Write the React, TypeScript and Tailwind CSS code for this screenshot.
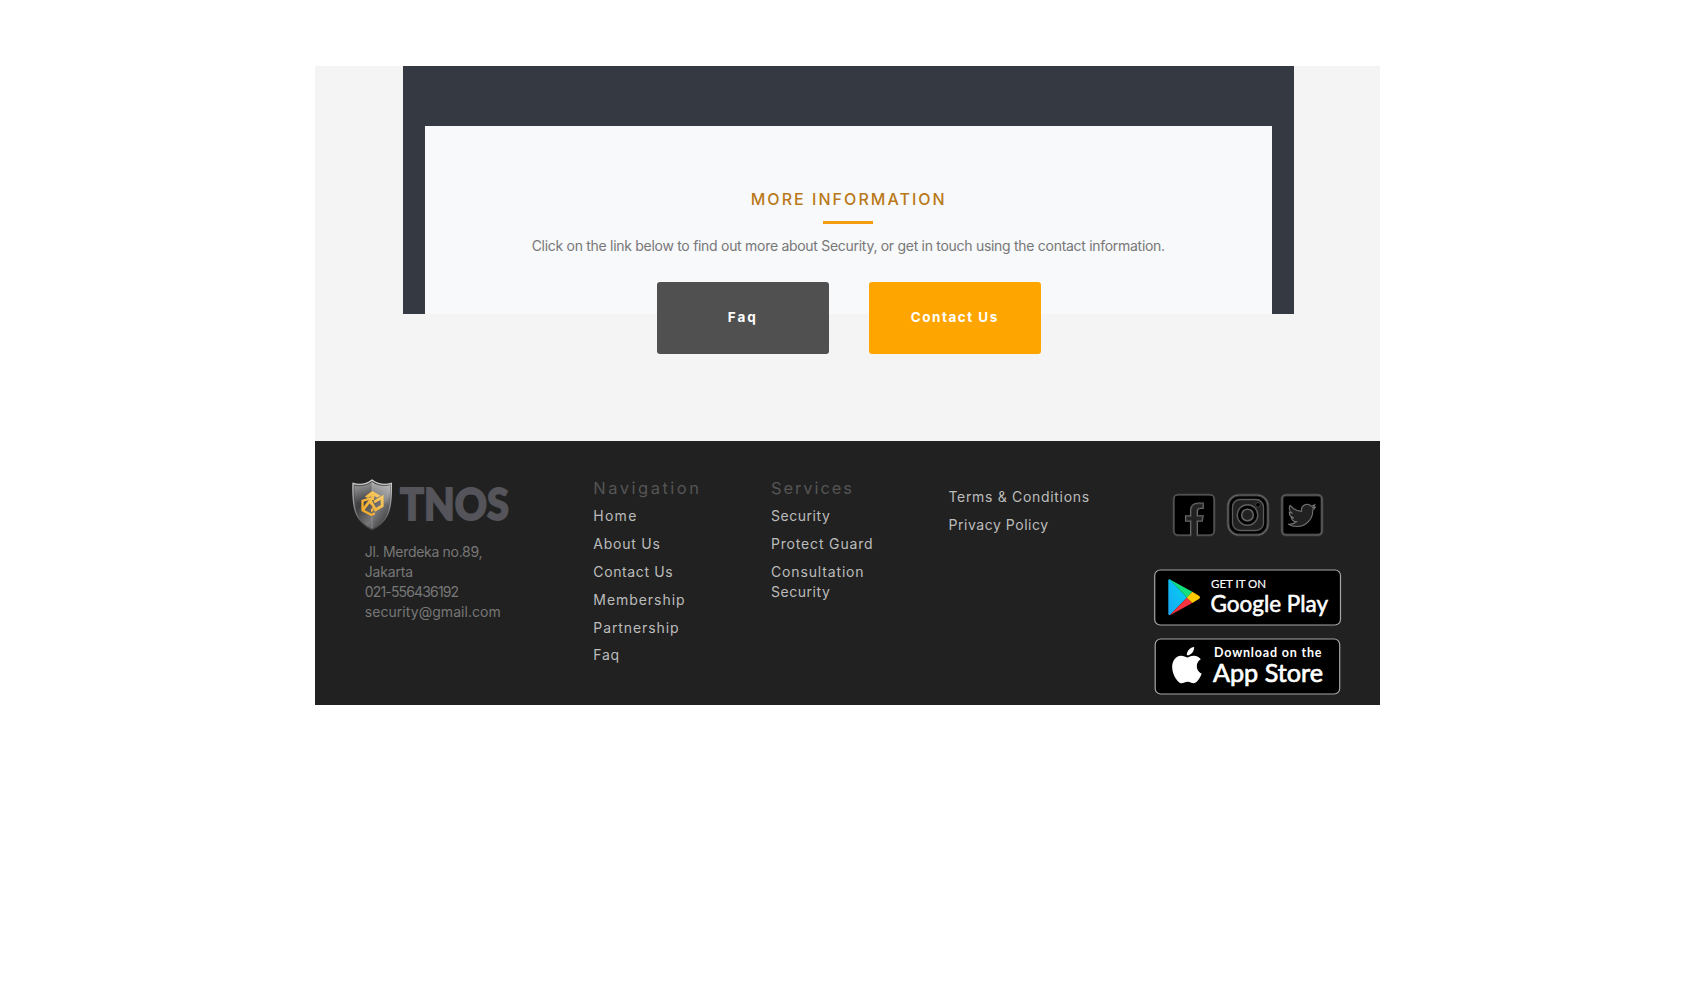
import type { ReactNode } from "react";

type Item = { label: string; tracking: string };

const navigation: Item[] = [
  { label: "Home", tracking: "tracking-[1.26px]" },
  { label: "About Us", tracking: "tracking-[0.75px]" },
  { label: "Contact Us", tracking: "tracking-[0.63px]" },
  { label: "Membership", tracking: "tracking-[0.95px]" },
  { label: "Partnership", tracking: "tracking-[0.9px]" },
  { label: "Faq", tracking: "tracking-[0.7px]" },
];

const services: Item[] = [
  { label: "Security", tracking: "tracking-[0.54px]" },
  { label: "Protect Guard", tracking: "tracking-[0.83px]" },
  { label: "Consultation", tracking: "tracking-[0.85px]" },
];

const legal: Item[] = [
  { label: "Terms & Conditions", tracking: "tracking-[0.68px]" },
  { label: "Privacy Policy", tracking: "tracking-[0.54px]" },
];

function Links({ items, children }: { items: Item[]; children?: ReactNode }) {
  return (
    <ul className="flex flex-col gap-[7.9px] text-[14px] leading-5 text-[#bcbcbc]">
      {items.map((item, i) => (
        <li key={item.label} className={item.tracking}>
          {item.label}
          {i === items.length - 1 && children}
        </li>
      ))}
    </ul>
  );
}

function Column({ title, children, className }: { title: string; children: ReactNode; className: string }) {
  return (
    <div className={className}>
      <h3 className="mb-[6px] text-[16.5px] leading-6 text-[#555]">{title}</h3>
      {children}
    </div>
  );
}

function Shield() {
  return (
    <svg className="h-[52px] w-[41px] shrink-0" viewBox="0 0 41 52">
      <defs>
        <linearGradient id="steel" x1="0" y1="0" x2="1" y2="0.9">
          <stop offset="0" stopColor="#6a6a6c" />
          <stop offset="0.35" stopColor="#3e3e40" />
          <stop offset="0.65" stopColor="#77777a" />
          <stop offset="1" stopColor="#2c2c2e" />
        </linearGradient>
        <linearGradient id="rim" x1="0" y1="0" x2="0" y2="1">
          <stop offset="0" stopColor="#d4d4d4" />
          <stop offset="0.55" stopColor="#8c8c8e" />
          <stop offset="1" stopColor="#3a3a3a" />
        </linearGradient>
        <linearGradient id="shine" x1="0" y1="0" x2="0" y2="1">
          <stop offset="0" stopColor="#fff" stopOpacity="0.6" />
          <stop offset="1" stopColor="#fff" stopOpacity="0" />
        </linearGradient>
        <linearGradient id="gold" x1="0" y1="40" x2="35" y2="10" gradientUnits="userSpaceOnUse">
          <stop offset="0.2" stopColor="#f2a51e" />
          <stop offset="1" stopColor="#f8d477" />
        </linearGradient>
      </defs>
      <path
        d="M20 1C15 5 8 6.500 1 4.400C.6 17 .8 27 4.800 36C8 43 14 47.500 20 51C26.500 47.500 32 43 35.300 36C39.500 27 39.700 17 39.300 4.400C32.500 6.500 25.500 5 20 1Z"
        fill="url(#steel)"
        stroke="url(#rim)"
        strokeWidth="1.3"
      />
      <path d="M20 3C25.500 7 31.500 8 38 6.200C38.100 13 38 20 36.500 27L20 18Z" fill="url(#shine)" />
      <path d="M2.500 7C8.500 8 14.500 7 20 3V18L3.500 24C2.500 18 2.500 12 2.500 7Z" fill="url(#shine)" opacity="0.65" />
      <path d="M20 2V12M20 38V49" stroke="#bbb" strokeWidth="0.7" opacity="0.6" />
      <g fill="none" stroke="url(#gold)" strokeWidth="2.800">
        <path d="M22.800 34.300L19.500 36L10.500 31.200V21.800L19 19.200V25.500" strokeWidth="2.300" />
        <path d="M11 30.800L18.300 21.200L23.500 30.800L30.200 27V18.200L22 23" />
      </g>
      <path d="M12.800 17.400L20.300 12L28.500 16.800L25 18.600L22.200 17.100V21H19.200V17.300L15.800 19.100Z" fill="url(#gold)" />
      <path d="M19 30L21.300 28.400V32L19 33Z" fill="url(#gold)" />
    </svg>
  );
}

function Logo() {
  return (
    <div className="ml-[37px] flex items-start">
      <Shield />
      <svg className="ml-[5.500px] h-[52px] w-[116px] overflow-visible" viewBox="0 0 116 52">
        <text
          x="1"
          y="41"
          fill="#54545a"
          stroke="#54545a"
          strokeWidth="1.800"
          fontFamily="Lato, sans-serif"
          fontWeight="900"
          fontSize="43"
          textLength="109"
          lengthAdjust="spacingAndGlyphs"
        >
          TNOS
        </text>
      </svg>
    </div>
  );
}

const tile = "h-[44px] w-[44px]";

function Facebook() {
  const d =
    "M18.500 42H6A4 4 0 0 1 2 38V6A4 4 0 0 1 6 2H38A4 4 0 0 1 42 6V38A4 4 0 0 1 38 42H25.500V28.300H30.300L31.300 22.700H25.500V18.500C25.500 16.500 26.500 15.500 28.500 15.500H31.300V10H26.500C21.500 10 18.500 13 18.500 17.800V22.700H13.500V28.300H18.500Z";
  return (
    <svg className={tile} viewBox="0 0 44 44">
      <path d={d} fill="#000" stroke="#363636" strokeWidth="3" />
      <path d={d} fill="#000" stroke="#686868" strokeWidth="1.100" />
    </svg>
  );
}

function Instagram() {
  return (
    <svg className={tile} viewBox="0 0 44 44" fill="none">
      <rect x="2" y="2" width="40" height="40" rx="11" fill="#000" stroke="#363636" strokeWidth="3" />
      <rect x="2" y="2" width="40" height="40" rx="11" stroke="#686868" strokeWidth="1.100" />
      <rect x="6.500" y="6.500" width="31" height="31" rx="7.500" fill="#212121" stroke="#5c5c5c" strokeWidth="1.300" />
      <circle cx="21.500" cy="22" r="10.300" fill="#000" stroke="#5e5e5e" strokeWidth="1.400" />
      <circle cx="21.500" cy="22" r="5.800" fill="#212121" stroke="#666" strokeWidth="1.500" />
      <circle cx="32" cy="11.800" r="2.400" fill="#000" stroke="#4a4a4a" strokeWidth="0.800" />
    </svg>
  );
}

function Twitter() {
  return (
    <svg className={tile} viewBox="0 0 44 44">
      <rect x="2" y="2" width="40" height="40" rx="4" fill="#000" stroke="#363636" strokeWidth="3" />
      <rect x="2" y="2" width="40" height="40" rx="4" fill="none" stroke="#686868" strokeWidth="1.100" />
      <path
        transform="translate(8.200 8.800) scale(1.140)"
        d="M23.950 4.570a10 10 0 0 1-2.820.770 4.960 4.960 0 0 0 2.160-2.720c-.950.550-2 .950-3.130 1.180a4.920 4.920 0 0 0-8.380 4.480C7.690 8.100 4.070 6.130 1.640 3.160a4.820 4.820 0 0 0-.670 2.480c0 1.710.870 3.210 2.190 4.100a4.900 4.900 0 0 1-2.230-.620v.060a4.920 4.920 0 0 0 3.950 4.830 5 5 0 0 1-2.210.080 4.940 4.940 0 0 0 4.600 3.420A9.870 9.870 0 0 1 0 19.540a14 14 0 0 0 7.550 2.210c9.050 0 14-7.500 14-13.980 0-.210 0-.420-.020-.630a9.940 9.940 0 0 0 2.460-2.550z"
        fill="#212121"
        stroke="#777"
        strokeWidth="0.900"
      />
    </svg>
  );
}

function GooglePlay() {
  return (
    <svg className="h-[57px] w-[188px]" viewBox="0 0 188 57">
      <rect x="0.700" y="1" width="185.800" height="55" rx="5.500" fill="#000" stroke="#a6a6a6" strokeWidth="1.200" />
      <defs>
        <linearGradient id="blue" x1="1" y1="0" x2="0" y2="1">
          <stop offset="0" stopColor="#00d8f0" />
          <stop offset="1" stopColor="#1aa5f5" />
        </linearGradient>
      </defs>
      <path d="M14.300 11.500Q14.300 9.800 16 10.500L33 28.500L16 46Q14.300 46.500 14.300 44.800Z" fill="url(#blue)" />
      <path d="M15.500 10.300L38.300 22.800L33 28.500Z" fill="#12e07c" />
      <path d="M15.500 46.400L38.300 34L33 28.500Z" fill="#f5333f" />
      <path d="M38.300 22.800L45.300 27Q46.800 28.300 45.300 29.800L38.300 34L32.800 28.500Z" fill="#ffc900" />
      <g fill="#fff" fontFamily="Lato, sans-serif">
        <text x="57" y="18.700" fontSize="11.500" fontWeight="400" stroke="#fff" strokeWidth="0.150" textLength="55" lengthAdjust="spacingAndGlyphs">
          GET IT ON
        </text>
        <text x="56.500" y="43" fontSize="24" fontWeight="400" stroke="#fff" strokeWidth="0.600" textLength="117.500" lengthAdjust="spacingAndGlyphs">
          Google Play
        </text>
      </g>
    </svg>
  );
}

function AppStore() {
  return (
    <svg className="h-[57px] w-[188px]" viewBox="0 0 188 57">
      <rect x="1.200" y="1" width="184.500" height="55" rx="5.500" fill="#000" stroke="#a6a6a6" strokeWidth="1.200" />
      <path
        transform="translate(14.800 9) scale(1.510)"
        fill="#fff"
        d="M12.152 6.896c-.948 0-2.415-1.078-3.960-1.040-2.040.027-3.910 1.183-4.961 3.014-2.117 3.675-.546 9.103 1.519 12.090 1.013 1.454 2.208 3.090 3.792 3.039 1.520-.065 2.090-.987 3.935-.987 1.831 0 2.350.987 3.960.948 1.637-.026 2.676-1.480 3.676-2.948 1.156-1.688 1.636-3.325 1.662-3.415-.039-.013-3.182-1.221-3.220-4.857-.026-3.040 2.480-4.494 2.597-4.559-1.429-2.090-3.623-2.324-4.390-2.376-2-.156-3.675 1.090-4.610 1.090zM15.530 3.830c.843-1.012 1.400-2.427 1.245-3.830-1.207.052-2.662.805-3.532 1.818-.780.896-1.454 2.338-1.273 3.714 1.338.104 2.715-.688 3.559-1.701"
      />
      <g fill="#fff" fontFamily="Lato, sans-serif">
        <text x="60" y="19" fontSize="12.500" fontWeight="700" textLength="107.500" lengthAdjust="spacing">
          Download on the
        </text>
        <text x="59" y="44" fontSize="25" fontWeight="400" stroke="#fff" strokeWidth="0.700" textLength="110" lengthAdjust="spacingAndGlyphs">
          App Store
        </text>
      </g>
    </svg>
  );
}

const button =
  "flex h-[72px] w-[172px] items-center justify-center rounded-[3px] pb-px text-[13.500px] leading-5 font-bold text-white";

export default function App() {
  return (
    <div className="h-[1000px] w-full overflow-hidden bg-white pt-[66px] pl-[315px] font-['Inter',sans-serif]">
      <div className="w-[1065px]">
        <main className="h-[375px] bg-[#f4f4f4] pl-[88px]">
          <section className="h-[248px] w-[890.500px] bg-[#353942] px-[22px] pt-[60px]">
            <div className="flex h-[188px] flex-col items-center bg-[#f8f9fb] pt-[61px]">
              <h2 className="pl-px text-[16px] leading-6 font-medium tracking-[2.040px] whitespace-nowrap text-[#b9791a]">
                MORE INFORMATION
              </h2>
              <div className="mt-[10px] h-[3px] w-[50px] shrink-0 bg-[#f39c12]" />
              <p className="mt-[11.500px] text-[14px] leading-5 tracking-[-0.290px] whitespace-nowrap text-[#777]">
                Click on the link below to find out more about Security, or get in touch using the contact information.
              </p>
              <div className="mt-[26px] flex shrink-0 gap-10 pl-px">
                <button className={`${button} bg-[#505050] tracking-[1.980px]`}>Faq</button>
                <button className={`${button} bg-[#ffa500] tracking-[1.500px]`}>Contact Us</button>
              </div>
            </div>
          </section>
        </main>

        <footer className="flex h-[264px] bg-[#212121]">
          <div className="w-[278.300px] pt-[37.500px]">
            <Logo />
            <address className="mt-[11.500px] ml-[49.800px] text-[14px] leading-5 text-[#777] not-italic">
              <p className="tracking-[-0.300px]">Jl. Merdeka no.89,</p>
              <p className="tracking-[-0.180px]">Jakarta</p>
              <p className="tracking-[-0.850px]">021-556436192</p>
              <p className="tracking-[0.050px]">security@gmail.com</p>
            </address>
          </div>
          <Column title="Navigation" className="w-[177.700px] pt-[35px] [&>h3]:tracking-[2.500px]">
            <Links items={navigation} />
          </Column>
          <Column title="Services" className="w-[177.500px] pt-[35px] pr-[60px] [&>h3]:tracking-[1.900px]">
            <Links items={services}>
              <span className="block tracking-[0.540px]">Security</span>
            </Links>
          </Column>
          <div className="w-[206px] pt-[46px]">
            <Links items={legal} />
          </div>
          <div className="flex flex-col pt-[52px]">
            <div className="ml-[17.500px] flex gap-[10px]">
              <Facebook />
              <Instagram />
              <Twitter />
            </div>
            <div className="mt-[32px] flex flex-col gap-[11.500px]">
              <GooglePlay />
              <AppStore />
            </div>
          </div>
        </footer>
      </div>
    </div>
  );
}
